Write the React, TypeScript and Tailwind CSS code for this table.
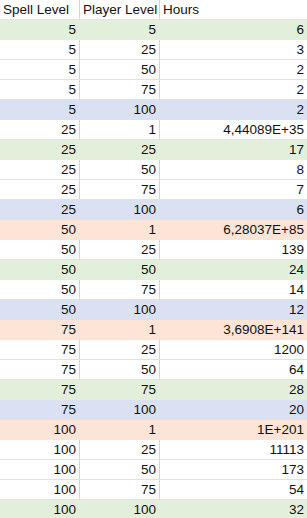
import React from "react"

type Fill = "none" | "green" | "blue" | "orange"

const rows: [string, string, string, Fill][] = [
  ["5", "5", "6", "green"],
  ["5", "25", "3", "none"],
  ["5", "50", "2", "none"],
  ["5", "75", "2", "none"],
  ["5", "100", "2", "blue"],
  ["25", "1", "4,44089E+35", "none"],
  ["25", "25", "17", "green"],
  ["25", "50", "8", "none"],
  ["25", "75", "7", "none"],
  ["25", "100", "6", "blue"],
  ["50", "1", "6,28037E+85", "orange"],
  ["50", "25", "139", "none"],
  ["50", "50", "24", "green"],
  ["50", "75", "14", "none"],
  ["50", "100", "12", "blue"],
  ["75", "1", "3,6908E+141", "orange"],
  ["75", "25", "1200", "none"],
  ["75", "50", "64", "none"],
  ["75", "75", "28", "green"],
  ["75", "100", "20", "blue"],
  ["100", "1", "1E+201", "orange"],
  ["100", "25", "11113", "none"],
  ["100", "50", "173", "none"],
  ["100", "75", "54", "none"],
  ["100", "100", "32", "green"],
]

const fills: Record<Fill, string> = {
  none: "bg-white",
  green: "bg-[#e2efda]",
  blue: "bg-[#d9e1f2]",
  orange: "bg-[#fce4d6]",
}

export default function App() {
  return (
    <div
      className="w-[307px] h-[518px] overflow-hidden bg-white text-[13.5px] text-[#111]"
      style={{ fontFamily: '"Liberation Sans", Arial, sans-serif' }}
    >
      <div className="grid grid-cols-[80px_80px_1fr] h-[20px] border-b border-[#e1e1e1]">
        <div className="pl-[3px] leading-[19px] border-r border-[#d4d4d4]">Spell Level</div>
        <div className="pl-[3px] leading-[19px] border-r border-[#d4d4d4]">Player Level</div>
        <div className="pl-[3px] leading-[19px]">Hours</div>
      </div>
      {rows.map(([spell, player, hours, fill], i) => {
        const lined = fill === "none"
        return (
          <div
            key={i}
            className={`grid grid-cols-[80px_80px_1fr] h-[20px] border-b ${
              lined ? "border-[#e1e1e1]" : "border-transparent"
            } ${fills[fill]}`}
          >
            <div
              className={`text-right pr-[3px] leading-[19px] border-r ${
                lined ? "border-[#d4d4d4]" : "border-transparent"
              }`}
            >
              {spell}
            </div>
            <div
              className={`text-right pr-[3px] leading-[19px] border-r ${
                lined ? "border-[#d4d4d4]" : "border-transparent"
              }`}
            >
              {player}
            </div>
            <div className="text-right pr-[3px] leading-[19px]">{hours}</div>
          </div>
        )
      })}
    </div>
  )
}
